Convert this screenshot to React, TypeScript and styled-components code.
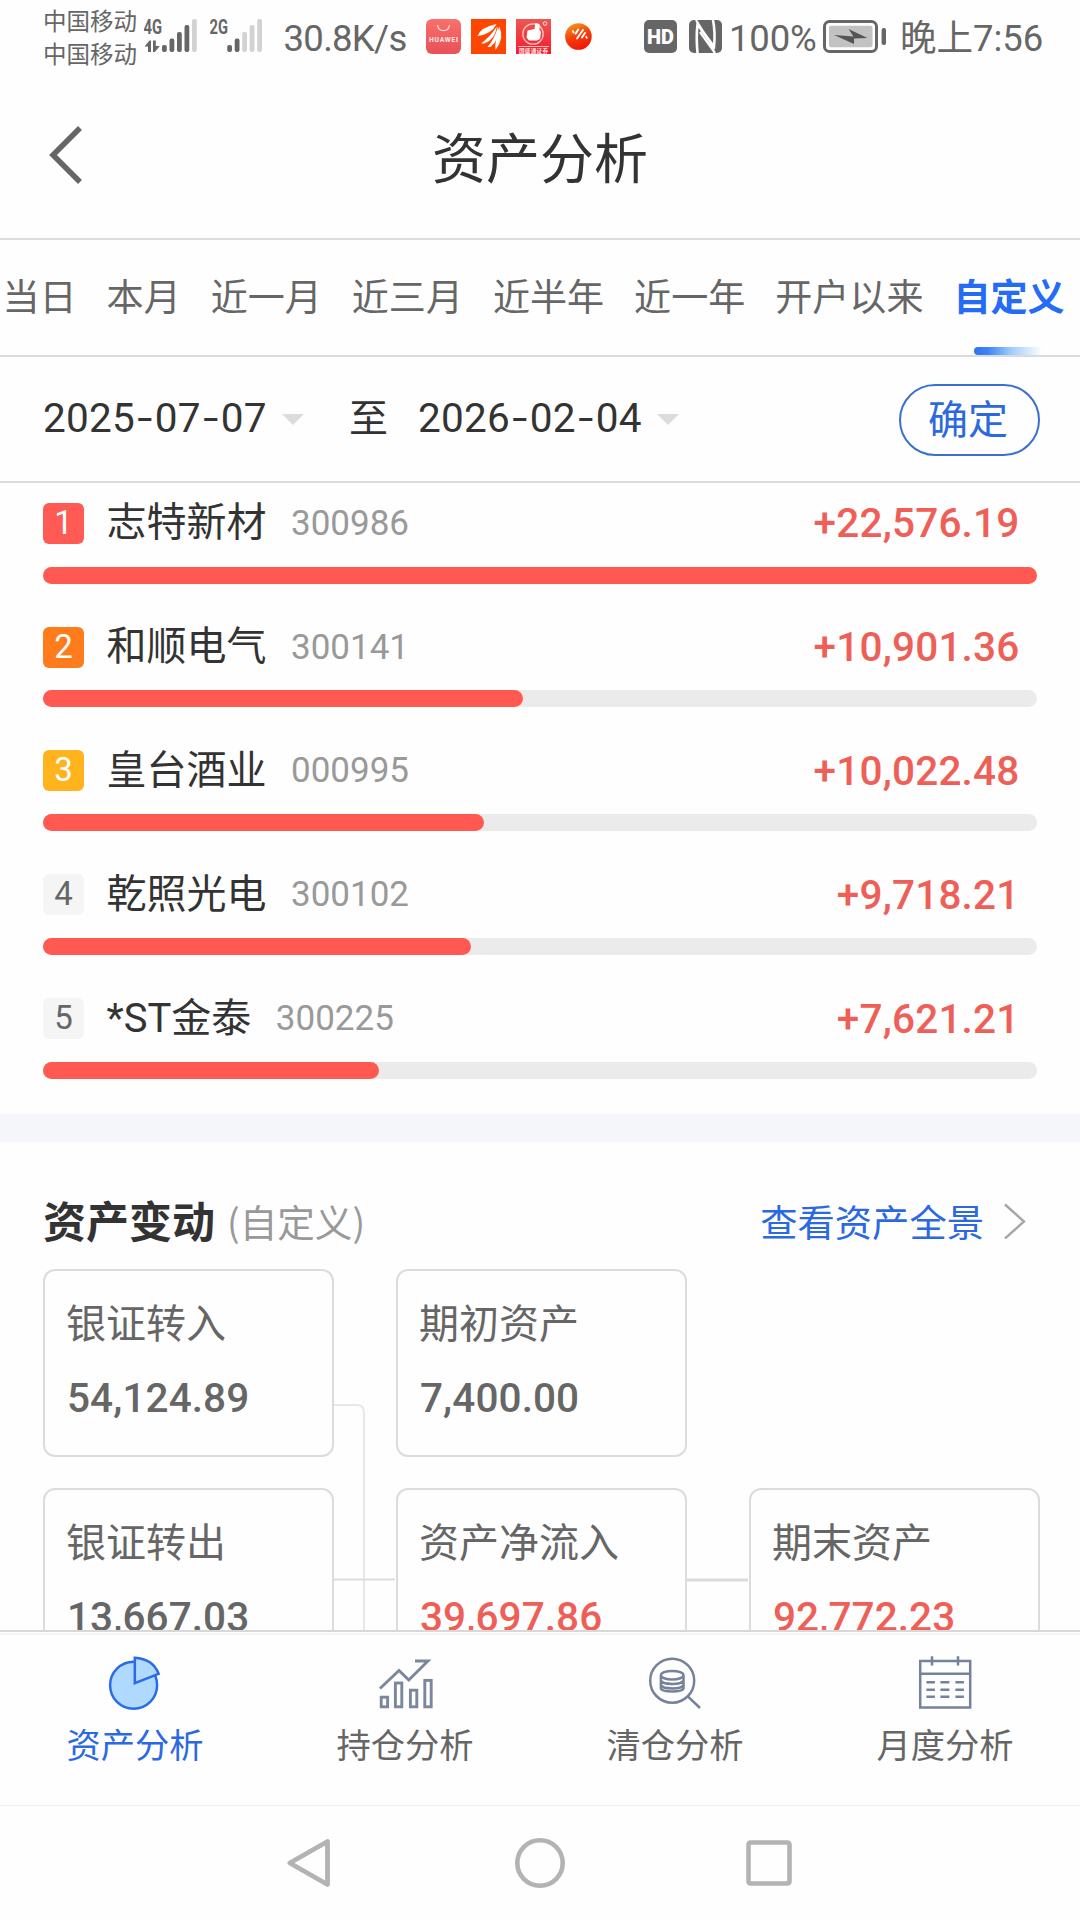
import React from "react";
import styled, { createGlobalStyle } from "styled-components";

const CJK = `"Noto Sans CJK SC", sans-serif`;
const NUM = `Roboto, "Noto Sans CJK SC", sans-serif`;

const GlobalStyle = createGlobalStyle`
  * { box-sizing: border-box; }
  html, body { margin: 0; background: #fdfdfd; }
  body { font-family: ${CJK}; color: #333; }
  button { font: inherit; background: none; border: 0; padding: 0; }
`;

const Screen = styled.div`
  width: 1080px;
  height: 1920px;
  display: flex;
  flex-direction: column;
  overflow: hidden;
  background: #fefefe;
  white-space: nowrap;
`;

/* ---------- status bar ---------- */

const StatusBar = styled.header`
  height: 74px;
  flex: none;
  display: flex;
  align-items: flex-start;
  padding: 0 37px 0 43px;
  color: #666;
`;

const Carriers = styled.div`
  width: 94px;
  padding-top: 4px;
  font-size: 23.5px;
  line-height: 32.5px;
`;

const StatusText = styled.div<{ $width: number; $left: number; $spacing?: number }>`
  width: ${(p) => p.$width}px;
  height: 60px;
  padding-top: 13px;
  padding-left: ${(p) => p.$left}px;
  font-family: ${NUM};
  font-size: 36.5px;
  line-height: 52px;
  letter-spacing: ${(p) => p.$spacing ?? 0}px;
`;

const StatusIcon = styled.svg<{ $left?: number }>`
  flex: none;
  display: block;
  margin-left: ${(p) => p.$left ?? 0}px;
`;

const Spacer = styled.div`
  flex: 1;
`;

/* ---------- title ---------- */

const TitleBar = styled.div`
  height: 166px;
  flex: none;
  display: grid;
  grid-template-columns: 120px 1fr 120px;
  border-bottom: 2px solid #dcdcdc;
`;

const BackButton = styled.button`
  display: flex;
  padding: 50px 0 0 48px;
`;

const Title = styled.h1`
  margin: 0;
  padding-top: 43px;
  text-align: center;
  font-size: 54px;
  line-height: 78px;
  font-weight: 400;
  color: #333;
`;

/* ---------- range tabs ---------- */

const Tabs = styled.nav`
  height: 117px;
  flex: none;
  display: flex;
  gap: 29.9px;
  padding-left: 2.5px;
  border-bottom: 2px solid #dadada;
`;

const Tab = styled.div<{ $active?: boolean }>`
  height: 115px;
  flex: none;
  display: flex;
  flex-direction: column;
  align-items: center;
  justify-content: space-between;
  padding-top: 28px;
  font-size: 37.1px;
  line-height: 54px;
  color: ${(p) => (p.$active ? "#246bf5" : "#666")};
  font-weight: ${(p) => (p.$active ? 700 : 400)};
`;

const TabMark = styled.div`
  width: 68px;
  height: 8px;
  margin-right: 3px;
  border-radius: 4px;
  background: linear-gradient(90deg, #2f74f2 0%, #3f82f5 20%, #9fcdfb 55%, #fefefe 100%);
`;

/* ---------- date filter ---------- */

const Filter = styled.div`
  height: 126px;
  flex: none;
  display: flex;
  align-items: center;
  padding: 1px 40px 0 43px;
  border-bottom: 2px solid #dcdcdc;
`;

const DateText = styled.div`
  width: 239px;
  padding-bottom: 4px;
  font-family: ${NUM};
  font-size: 40.5px;
  letter-spacing: 0.2px;
  line-height: 48px;
`;

const Dash = styled.span`
  display: inline-block;
  width: 20px;
  text-align: center;
  transform: scaleX(1.35);
`;

const Caret = styled.div`
  border: 11px solid transparent;
  border-top-color: #dcdcdc;
  border-bottom: 0;
`;

const To = styled.div`
  width: 114px;
  padding: 0 0 9px 45px;
  font-size: 39px;
  line-height: 56px;
`;

const Confirm = styled.button`
  width: 141px;
  height: 72px;
  padding: 0 3px 6px 0;
  margin-left: auto;
  border: 2px solid #3a70cf;
  border-radius: 36px;
  font-size: 40px;
  line-height: 60px;
  color: #2c69e0;
`;

/* ---------- ranking ---------- */

const Ranking = styled.section`
  height: 631px;
  flex: none;
  display: flex;
  flex-direction: column;
  padding: 12.4px 43px 0;
`;

const RankRow = styled.div`
  height: 123.8px;
  flex: none;
`;

const RankHead = styled.div`
  height: 56px;
  display: flex;
  align-items: center;
`;

const Badge = styled.div<{ $bg: string; $fg: string }>`
  width: 41px;
  height: 41px;
  border-radius: 6px;
  background: ${(p) => p.$bg};
  color: ${(p) => p.$fg};
  font-family: ${NUM};
  font-size: 33px;
  line-height: 40px;
  text-align: center;
`;

const StockName = styled.div`
  margin: 0 24.5px 0 22.5px;
  font-family: ${NUM};
  font-size: 40px;
  line-height: 54px;
`;

const StockCode = styled.div`
  font-family: ${NUM};
  font-size: 35px;
  color: #999;
`;

const Amount = styled.div`
  margin-left: auto;
  padding-right: 17.5px;
  font-family: ${NUM};
  font-size: 40.5px;
  font-weight: 500;
  letter-spacing: 0.2px;
  color: #ee5f58;
`;

const Track = styled.div`
  height: 17px;
  margin-top: 15.2px;
  border-radius: 9px;
  background: #ebebeb;
`;

const Fill = styled.div`
  height: 100%;
  border-radius: 9px;
  background: #ff5952;
`;

const Band = styled.div`
  height: 28px;
  flex: none;
  background: #f5f6f9;
`;

/* ---------- asset changes ---------- */

const Changes = styled.section`
  flex: 1;
  min-height: 0;
  overflow: hidden;
`;

const SectionHead = styled.div`
  height: 127px;
  display: flex;
  align-items: center;
  padding: 31px 53px 0 43px;
`;

const SectionTitle = styled.h2`
  margin: 0;
  padding-bottom: 4px;
  font-size: 43px;
  line-height: 60px;
  font-weight: 700;
`;

const SectionNote = styled.span`
  padding: 0 0 1px 12px;
  font-size: 37.6px;
  color: #999;
`;

const Link = styled.a`
  display: flex;
  align-items: center;
  gap: 19px;
  margin-left: auto;
  font-size: 37.3px;
  color: #2a69e2;
`;

const FlowGrid = styled.div`
  position: relative;
  display: grid;
  grid-template-columns: repeat(3, 291px);
  grid-auto-rows: 188px;
  column-gap: 62px;
  row-gap: 31px;
  padding-left: 43px;
`;

const FlowLines = styled.svg`
  position: absolute;
  left: 0;
  top: 0;
`;

const Card = styled.div`
  border: 2px solid #dcdcdc;
  border-radius: 12px;
  padding: 21px 0 0 21px;
`;

const CardLabel = styled.div`
  font-size: 40px;
  line-height: 58px;
  color: #666;
`;

const CardValue = styled.div<{ $red?: boolean }>`
  margin-top: 24px;
  padding-left: 1px;
  font-family: ${NUM};
  font-size: 40.5px;
  line-height: 48px;
  font-weight: 500;
  letter-spacing: 0.1px;
  color: ${(p) => (p.$red ? "#ee5f58" : "#666")};
`;

/* ---------- bottom bars ---------- */

const BottomNav = styled.nav`
  height: 176px;
  flex: none;
  display: grid;
  grid-template-columns: repeat(4, 270px);
  border-top: 2px solid #d8d8d8;
  border-bottom: 1px solid #f0f0f0;
`;

const NavItem = styled.div<{ $active?: boolean }>`
  display: flex;
  flex-direction: column;
  align-items: center;
  border-top: 1px solid #fefefe;
  box-shadow: inset 0 2px 0 #f4f4f4;
  padding-top: 20px;
  font-size: 34.3px;
  line-height: 50px;
  color: ${(p) => (p.$active ? "#2a69e2" : "#666")};
  svg {
    display: block;
    margin-bottom: 9px;
  }
`;

const SystemNav = styled.footer`
  height: 114px;
  flex: none;
  display: flex;
  justify-content: center;
  align-items: center;
  gap: 180px;
`;

/* ---------- drawings ---------- */

const INK = "#666";
const PALE = "#d2d2d2";

function Signal({ label, active, start }: { label: string; active: number; start: number }) {
  return (
    <>
      <text x="-0.5" y="34" fontFamily="Roboto, sans-serif" fontSize="21" fontWeight="700" fill={INK} textLength="18.5" lengthAdjust="spacingAndGlyphs">
        {label}
      </text>
      {[45, 38.5, 32, 25, 19].map((y, i) => (
        <rect key={y} x={start + i * 7.5} y={y} width="4.8" height={52 - y} rx="2" fill={i < active ? INK : PALE} />
      ))}
    </>
  );
}

function StatusSection() {
  return (
    <StatusBar>
      <Carriers>
        中国移动
        <br />
        中国移动
      </Carriers>
      <StatusIcon width="54" height="60" $left={7}>
        <Signal label="4G" active={4} start={18} />
        <path d="M0.500 46.500L5.500 40.500H7V52H4V46.500z" fill={INK} />
        <path d="M9 40.500H11.800V46H15.800L10.800 52H9z" fill={INK} />
      </StatusIcon>
      <StatusIcon width="54" height="60" $left={12}>
        <Signal label="2G" active={2} start={17.2} />
      </StatusIcon>
      <StatusText $width={163} $left={19.5} $spacing={-0.7}>
        30.8K/s
      </StatusText>
      <StatusIcon width="166" height="60" viewBox="426 0 166 60" $left={-1}>
        <defs>
          <linearGradient id="mall" x1="0" y1="0" x2="0" y2="1">
            <stop offset="0" stopColor="#f9706a" />
            <stop offset="1" stopColor="#e85158" />
          </linearGradient>
          <linearGradient id="ball" x1="0.2" y1="0" x2="0.6" y2="1">
            <stop offset="0" stopColor="#f59a1c" />
            <stop offset="0.5" stopColor="#f5400c" />
            <stop offset="1" stopColor="#f01408" />
          </linearGradient>
          <linearGradient id="hand" x1="0" y1="0" x2="0" y2="1">
            <stop offset="0" stopColor="#ea5a52" />
            <stop offset="1" stopColor="#f8182c" />
          </linearGradient>
        </defs>
        <rect x="426" y="19" width="35" height="35" rx="6" fill="url(#mall)" />
        <path d="M437.500 25c1 7.500 11 7.500 12 0" fill="none" stroke="#ffd9d6" strokeWidth="1.3" />
        <text x="429" y="42" fontFamily="Roboto, sans-serif" fontSize="6.8" fontWeight="700" fill="#ffe9e7" textLength="29">
          HUAWEI
        </text>
        <rect x="471" y="19" width="35" height="35" fill="#ff4600" />
        <g fill="#fff">
          <path d="M477.500 36Q481 27 496.500 24 492 34 477.500 36z" />
          <path d="M481 43.500Q490 37 496.800 26.500 495.500 39 484.500 43.500z" />
          <path d="M487.500 47Q494.500 39 498 26.500 499.800 40 490.500 47z" />
          <path d="M495.500 50Q494.500 42 499.200 26.500 505 38 495.500 50z" />
        </g>
        <rect x="516" y="19" width="35" height="35" fill="url(#hand)" />
        <circle cx="533" cy="34" r="10.2" fill="none" stroke="#ffc5c0" strokeWidth="1.3" />
        <path d="M527.500 30.500l7-1.500 1-6 4 1v6l1.500 2-1 7-3 1.500h-8l-2.500-3z" fill="#fff" />
        <circle cx="545" cy="23.500" r="1.800" fill="none" stroke="#ffe0dd" strokeWidth="1" />
        <path d="M518 46.500H549" stroke="#ffc4c0" strokeWidth="1" />
        <text x="519" y="53" fontFamily={CJK} fontSize="5.6" fontWeight="700" fill="#ffe9e7" textLength="29">
          国盛通证券
        </text>
        <circle cx="578.400" cy="36.500" r="13.300" fill="url(#ball)" />
        <path
          d="M572.800 31l.8 1.500M575.600 33.800l2.600-4.300M577 38.500l6-8.500M582 37.500l3-4.500M586.200 36.800l.5 1"
          stroke="#fff"
          strokeWidth="1.900"
          strokeLinecap="round"
        />
      </StatusIcon>
      <Spacer />
      <StatusIcon width="78" height="60" viewBox="644 0 78 60">
        <rect x="644" y="20" width="33" height="33" rx="5" fill={INK} />
        <text x="647" y="44" fontFamily="Roboto, sans-serif" fontSize="21" fontWeight="900" fill="#fff" textLength="27" lengthAdjust="spacingAndGlyphs">
          HD
        </text>
        <rect x="689" y="20" width="33" height="33" rx="5" fill={INK} />
        <path d="M697.500 53q-1.500-16 0-28.500l16.500 22q1.500-14-1-26.500" fill="none" stroke="#fefefe" strokeWidth="2.600" />
        <path d="M696 20L714 49" fill="none" stroke="#fefefe" strokeWidth="2.200" />
        <path d="M700 32l15 21" fill="none" stroke="#fefefe" strokeWidth="2.200" />
      </StatusIcon>
      <StatusText $width={101} $left={7} $spacing={-0.2}>
        100%
      </StatusText>
      <StatusIcon width="64" height="60" viewBox="823 0 64 60">
        <rect x="824.500" y="21.500" width="52" height="30" rx="5" fill="none" stroke={INK} strokeWidth="3" />
        <rect x="829" y="25.700" width="43.500" height="21.500" rx="2" fill="#c2c2c2" />
        <path d="M834 35l19.500 1.500-5-7.500 19 9-13.500.500v5.500z" fill="#555" />
        <rect x="881.600" y="28" width="4.400" height="17" rx="2" fill={INK} />
      </StatusIcon>
      <StatusText $width={156} $left={13}>
        晚上7:56
      </StatusText>
    </StatusBar>
  );
}

const PieIcon = () => (
  <svg width="54" height="56" viewBox="108 1653 54 56" overflow="visible">
    <g fill="#b0d9ff" stroke="#2a6be8" strokeWidth="2.500">
      <circle cx="133.600" cy="1685.300" r="23.500" />
      <path d="M134.800 1683.200V1657.800Q153 1659 158.600 1673.800Z" />
    </g>
  </svg>
);

const TrendIcon = () => (
  <svg width="54" height="56" viewBox="378 1653 54 56" overflow="visible">
    <g fill="none" stroke="#7a879c" strokeWidth="2.900">
      <path d="M380 1688.500L399 1670.500 408.800 1680 428 1661H415" />
      <rect x="381.200" y="1697.200" width="6.400" height="9.600" />
      <rect x="395.400" y="1683" width="6.400" height="23.800" />
      <rect x="410.400" y="1690.200" width="6.400" height="16.600" />
      <rect x="424.800" y="1680.400" width="6.400" height="26.400" />
    </g>
  </svg>
);

const CoinsIcon = () => (
  <svg width="54" height="56" viewBox="648 1653 54 56" overflow="visible">
    <g fill="none" stroke="#74839b" strokeWidth="2.500">
      <circle cx="672.200" cy="1680.700" r="22" />
      <path d="M687.800 1696.300L700 1708" />
      <ellipse cx="672.200" cy="1675.200" rx="11.300" ry="4.300" />
      <path d="M660.900 1676v12.500c1.500 4 21 4 22.600 0V1676M660.900 1680.500c1.500 4.500 21 4.500 22.600 0M660.900 1685c1.500 4.500 21 4.500 22.600 0" />
    </g>
  </svg>
);

const CalendarIcon = () => (
  <svg width="54" height="56" viewBox="918 1653 54 56" overflow="visible">
    <g fill="none" stroke="#74839b" strokeWidth="2.500">
      <rect x="920.200" y="1661" width="50" height="46.500" />
      <path d="M920 1673.700H970M932 1656.300V1665.500M958 1656.300V1665.500" />
      <path d="M926.400 1682.300h8.500m5.500 0h9m6 0h8.500M926.400 1689.700h8.500m5.500 0h9m6 0h8.500M926.400 1696.800h8.500m5.500 0h9m6 0h8.500" />
    </g>
  </svg>
);

/* ---------- data ---------- */

const ranges = ["当日", "本月", "近一月", "近三月", "近半年", "近一年", "开户以来", "自定义"];

const stocks = [
  { name: "志特新材", code: "300986", gain: 22576.19, bg: "#ff5a54", fg: "#fff" },
  { name: "和顺电气", code: "300141", gain: 10901.36, bg: "#ff7c1c", fg: "#fff" },
  { name: "皇台酒业", code: "000995", gain: 10022.48, bg: "#ffb31c", fg: "#fff" },
  { name: "乾照光电", code: "300102", gain: 9718.21, bg: "#f5f5f5", fg: "#666" },
  { name: "*ST金泰", code: "300225", gain: 7621.21, bg: "#f5f5f5", fg: "#666" },
];

const cards = [
  { label: "银证转入", value: "54,124.89" },
  { label: "期初资产", value: "7,400.00" },
  null,
  { label: "银证转出", value: "13,667.03" },
  { label: "资产净流入", value: "39,697.86", red: true },
  { label: "期末资产", value: "92,772.23", red: true },
];

const navItems = [
  { label: "资产分析", Icon: PieIcon },
  { label: "持仓分析", Icon: TrendIcon },
  { label: "清仓分析", Icon: CoinsIcon },
  { label: "月度分析", Icon: CalendarIcon },
];

const money = (n: number) => "+" + n.toLocaleString("en-US", { minimumFractionDigits: 2 });

function DateField({ value }: { value: string }) {
  const [year, month, day] = value.split("-");
  return (
    <>
      <DateText>
        {year}
        <Dash>-</Dash>
        {month}
        <Dash>-</Dash>
        {day}
      </DateText>
      <Caret />
    </>
  );
}

export default function App() {
  return (
    <Screen>
      <GlobalStyle />
      <StatusSection />
      <TitleBar>
        <BackButton aria-label="返回">
          <svg width="36" height="62" viewBox="0 0 36 62">
            <path d="M32 4L5 31l27 27" fill="none" stroke="#666" strokeWidth="5.500" />
          </svg>
        </BackButton>
        <Title>资产分析</Title>
      </TitleBar>
      <Tabs>
        {ranges.map((r) => (
          <Tab key={r} $active={r === "自定义"}>
            {r}
            {r === "自定义" && <TabMark />}
          </Tab>
        ))}
      </Tabs>
      <Filter>
        <DateField value="2025-07-07" />
        <To>至</To>
        <DateField value="2026-02-04" />
        <Confirm>确定</Confirm>
      </Filter>
      <Ranking>
        {stocks.map((s, i) => (
          <RankRow key={s.code}>
            <RankHead>
              <Badge $bg={s.bg} $fg={s.fg}>
                {i + 1}
              </Badge>
              <StockName>{s.name}</StockName>
              <StockCode>{s.code}</StockCode>
              <Amount>{money(s.gain)}</Amount>
            </RankHead>
            <Track>
              <Fill style={{ width: `${(s.gain / stocks[0].gain) * 100}%` }} />
            </Track>
          </RankRow>
        ))}
      </Ranking>
      <Band />
      <Changes>
        <SectionHead>
          <SectionTitle>资产变动</SectionTitle>
          <SectionNote>(自定义)</SectionNote>
          <Link>
            查看资产全景
            <svg width="24" height="36" viewBox="0 0 24 36">
              <path d="M2 1.500L21 18.500 2 35.500" fill="none" stroke="#a6a6a6" strokeWidth="2.400" />
            </svg>
          </Link>
        </SectionHead>
        <FlowGrid>
          <FlowLines width="1080" height="400">
            <path d="M334 136H357Q364 136 364 144V400" fill="none" stroke="#e8e8e8" strokeWidth="2.200" />
            <path d="M334 310.500H395" stroke="#dcdcdc" strokeWidth="2" />
            <path d="M686 311H748" stroke="#dadada" strokeWidth="3" />
          </FlowLines>
          {cards.map((c, i) =>
            c ? (
              <Card key={c.label}>
                <CardLabel>{c.label}</CardLabel>
                <CardValue $red={c.red}>{c.value}</CardValue>
              </Card>
            ) : (
              <div key={i} />
            )
          )}
        </FlowGrid>
      </Changes>
      <BottomNav>
        {navItems.map(({ label, Icon }, i) => (
          <NavItem key={label} $active={i === 0}>
            <Icon />
            {label}
          </NavItem>
        ))}
      </BottomNav>
      <SystemNav>
        <svg width="46" height="52" viewBox="0 0 46 52" overflow="visible">
          <path d="M39.500 4.500V47.500L1.800 26Z" fill="none" stroke="#b3b3b3" strokeWidth="4.800" strokeLinejoin="round" />
        </svg>
        <svg width="52" height="52" viewBox="0 0 52 52">
          <circle cx="26" cy="26" r="22.700" fill="none" stroke="#b3b3b3" strokeWidth="4.600" />
        </svg>
        <svg width="46" height="52" viewBox="0 0 46 52">
          <rect x="2.500" y="5.500" width="41" height="41" rx="2" fill="none" stroke="#b3b3b3" strokeWidth="4.600" />
        </svg>
      </SystemNav>
    </Screen>
  );
}
